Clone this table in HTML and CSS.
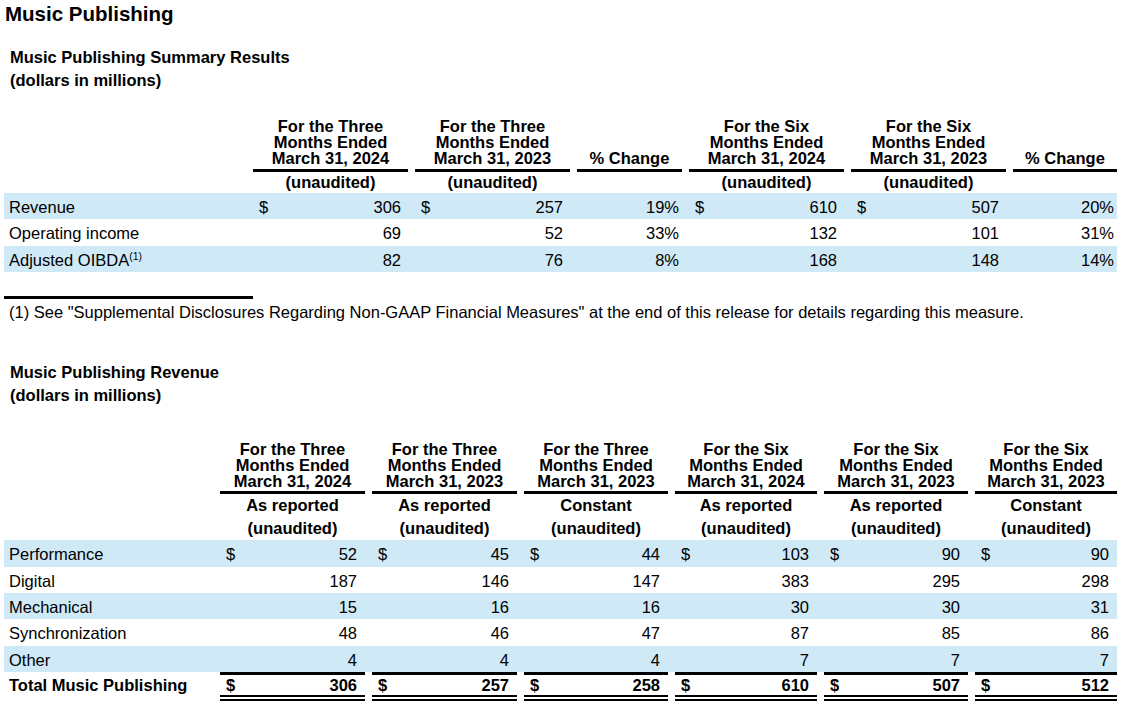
FILE: index.html
```html
<!DOCTYPE html>
<html>
<head>
<meta charset="utf-8">
<link rel="stylesheet" href="styles.css">
</head>
<body>
<h1 class="title">Music Publishing</h1>
<div class="subhead">Music Publishing Summary Results<br>(dollars in millions)</div>

<div class="tbl t1">
  <div class="row head">
    <div></div>
    <div class="hd">For the Three<br>Months Ended<br>March 31, 2024</div>
    <div class="hd">For the Three<br>Months Ended<br>March 31, 2023</div>
    <div class="hd">% Change</div>
    <div class="hd">For the Six<br>Months Ended<br>March 31, 2024</div>
    <div class="hd">For the Six<br>Months Ended<br>March 31, 2023</div>
    <div class="hd">% Change</div>
  </div>
  <div class="row sub1">
    <div></div>
    <div class="c">(unaudited)</div>
    <div class="c">(unaudited)</div>
    <div></div>
    <div class="c">(unaudited)</div>
    <div class="c">(unaudited)</div>
    <div></div>
  </div>
  <div class="row data band">
    <div class="lbl">Revenue</div>
    <div class="num"><span>$</span><span class="v">306</span></div>
    <div class="num"><span>$</span><span class="v">257</span></div>
    <div class="pct">19%</div>
    <div class="num"><span>$</span><span class="v">610</span></div>
    <div class="num"><span>$</span><span class="v">507</span></div>
    <div class="pct">20%</div>
  </div>
  <div class="row data">
    <div class="lbl">Operating income</div>
    <div class="num"><span class="v">69</span></div>
    <div class="num"><span class="v">52</span></div>
    <div class="pct">33%</div>
    <div class="num"><span class="v">132</span></div>
    <div class="num"><span class="v">101</span></div>
    <div class="pct">31%</div>
  </div>
  <div class="row data band">
    <div class="lbl">Adjusted OIBDA<sup class="fn">(1)</sup></div>
    <div class="num"><span class="v">82</span></div>
    <div class="num"><span class="v">76</span></div>
    <div class="pct">8%</div>
    <div class="num"><span class="v">168</span></div>
    <div class="num"><span class="v">148</span></div>
    <div class="pct">14%</div>
  </div>
</div>

<div class="fn-rule"></div>
<p class="footnote">(1) See "Supplemental Disclosures Regarding Non-GAAP Financial Measures" at the end of this release for details regarding this measure.</p>

<div class="subhead s2">Music Publishing Revenue<br>(dollars in millions)</div>

<div class="tbl t2">
  <div class="row head">
    <div></div>
    <div class="hd">For the Three<br>Months Ended<br>March 31, 2024</div>
    <div class="hd">For the Three<br>Months Ended<br>March 31, 2023</div>
    <div class="hd">For the Three<br>Months Ended<br>March 31, 2023</div>
    <div class="hd">For the Six<br>Months Ended<br>March 31, 2024</div>
    <div class="hd">For the Six<br>Months Ended<br>March 31, 2023</div>
    <div class="hd">For the Six<br>Months Ended<br>March 31, 2023</div>
  </div>
  <div class="row sub2">
    <div></div>
    <div class="c">As reported<br>(unaudited)</div>
    <div class="c">As reported<br>(unaudited)</div>
    <div class="c">Constant<br>(unaudited)</div>
    <div class="c">As reported<br>(unaudited)</div>
    <div class="c">As reported<br>(unaudited)</div>
    <div class="c">Constant<br>(unaudited)</div>
  </div>
  <div class="row data band">
    <div class="lbl">Performance</div>
    <div class="num"><span>$</span><span class="v">52</span></div>
    <div class="num"><span>$</span><span class="v">45</span></div>
    <div class="num"><span>$</span><span class="v">44</span></div>
    <div class="num"><span>$</span><span class="v">103</span></div>
    <div class="num"><span>$</span><span class="v">90</span></div>
    <div class="num"><span>$</span><span class="v">90</span></div>
  </div>
  <div class="row data">
    <div class="lbl">Digital</div>
    <div class="num"><span class="v">187</span></div>
    <div class="num"><span class="v">146</span></div>
    <div class="num"><span class="v">147</span></div>
    <div class="num"><span class="v">383</span></div>
    <div class="num"><span class="v">295</span></div>
    <div class="num"><span class="v">298</span></div>
  </div>
  <div class="row data band">
    <div class="lbl">Mechanical</div>
    <div class="num"><span class="v">15</span></div>
    <div class="num"><span class="v">16</span></div>
    <div class="num"><span class="v">16</span></div>
    <div class="num"><span class="v">30</span></div>
    <div class="num"><span class="v">30</span></div>
    <div class="num"><span class="v">31</span></div>
  </div>
  <div class="row data">
    <div class="lbl">Synchronization</div>
    <div class="num"><span class="v">48</span></div>
    <div class="num"><span class="v">46</span></div>
    <div class="num"><span class="v">47</span></div>
    <div class="num"><span class="v">87</span></div>
    <div class="num"><span class="v">85</span></div>
    <div class="num"><span class="v">86</span></div>
  </div>
  <div class="row data band">
    <div class="lbl">Other</div>
    <div class="num"><span class="v">4</span></div>
    <div class="num"><span class="v">4</span></div>
    <div class="num"><span class="v">4</span></div>
    <div class="num"><span class="v">7</span></div>
    <div class="num"><span class="v">7</span></div>
    <div class="num"><span class="v">7</span></div>
  </div>
  <div class="row total">
    <div class="lbl">Total Music Publishing</div>
    <div class="num"><span>$</span><span class="v">306</span></div>
    <div class="num"><span>$</span><span class="v">257</span></div>
    <div class="num"><span>$</span><span class="v">258</span></div>
    <div class="num"><span>$</span><span class="v">610</span></div>
    <div class="num"><span>$</span><span class="v">507</span></div>
    <div class="num"><span>$</span><span class="v">512</span></div>
  </div>
</div>
</body>
</html>
```
FILE: styles.css
```css
body {
  margin: 0;
  font-family: "Liberation Sans", Arial, sans-serif;
  color: #000;
  background: #fff;
}

.title {
  margin: 2px 0 0 5px;
  font-size: 20.5px;
  line-height: 24px;
  font-weight: bold;
}

.subhead {
  margin: 20px 0 0 10px;
  font-size: 16.5px;
  line-height: 23px;
  font-weight: bold;
}

.s2 {
  margin-top: 39px;
}

.tbl {
  margin-left: 4px;
  width: 1113px;
  font-size: 16.5px;
}

.t1 {
  margin-top: 26px;
}

.t2 {
  margin-top: 34px;
}

.row {
  display: grid;
  column-gap: 7px;
}

.t1 .row {
  grid-template-columns: 242px 155px 155px 105px 155px 155px 104px;
}

.t2 .row {
  grid-template-columns: 209px 145px 145px 144px 142px 144px 142px;
}

.head {
  align-items: end;
}

.hd {
  text-align: center;
  font-weight: bold;
  line-height: 16px;
  padding-bottom: 3px;
  border-bottom: 3px solid #000;
}

.t2 .hd {
  padding-bottom: 2px;
}

.sub1 .c {
  text-align: center;
  font-weight: bold;
  line-height: 20px;
  padding-bottom: 1px;
}

.sub2 .c {
  text-align: center;
  font-weight: bold;
  line-height: 23px;
}

.data {
  line-height: 24.4px;
  padding-top: 2px;
}

.band {
  background: #cfe9f7;
}

.lbl {
  padding-left: 5px;
  white-space: nowrap;
}

.num {
  display: flex;
  padding: 0 8px 0 6px;
}

.t1 .num {
  padding-right: 7px;
}

.num .v {
  margin-left: auto;
}

.pct {
  text-align: right;
  padding-right: 3px;
}

.fn {
  font-size: 10.5px;
  line-height: 0;
  vertical-align: 6px;
}

.total {
  font-weight: bold;
}

.total .lbl {
  padding-top: 4px;
  line-height: 19px;
}

.total .num {
  padding-top: 1px;
  line-height: 19px;
  border-top: 3px solid #000;
  border-bottom: 6px double #000;
}

.fn-rule {
  margin: 24px 0 0 4px;
  width: 249px;
  height: 3px;
  background: #000;
}

.footnote {
  margin: 3px 0 0 9px;
  font-size: 16.5px;
  line-height: 20px;
}
```
